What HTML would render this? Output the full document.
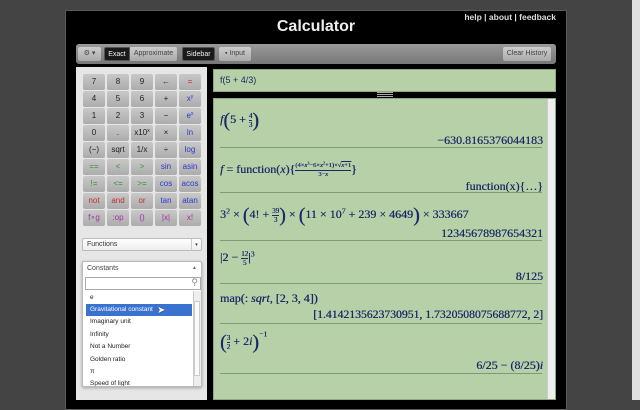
<!DOCTYPE html>
<html><head><meta charset="utf-8"><style>
*{box-sizing:border-box;margin:0;padding:0}
body{width:640px;height:400px;overflow:hidden;background:#444;font-family:"Liberation Sans",sans-serif;position:relative}
.a{position:absolute}
sup{font-size:65%;line-height:0;vertical-align:0.6em}
#panel{left:65px;top:10px;width:502px;height:400px;background:#000;border:1px solid #5a5a5a}
#title{left:65px;width:502px;top:18px;text-align:center;color:#eee;font-weight:bold;font-size:16px}
#links{right:84px;top:12px;color:#ddd;font-size:8.5px;font-weight:bold}
#bar{left:76px;top:44px;width:480px;height:20px;background:linear-gradient(#9a9a9a,#777);border-radius:3px}
.tb{position:absolute;top:47px;height:14px;font-size:7px;line-height:14px;text-align:center;border-radius:2px;background:linear-gradient(#ccc,#aaa);color:#444}
.dk{background:#1a1a1a;color:#eee;border:1px solid #555}
#side{left:76px;top:67px;width:131px;height:333px;background:#e6e6e6}
.b{position:absolute;width:22px;height:16px;background:linear-gradient(#c8c8c8,#acacac);border-radius:2px;font-size:8px;line-height:16px;text-align:center;color:#222;overflow:hidden}
.r{color:#c03030}.bl{color:#2a3acc}.g{color:#2a9a2a}.p{color:#a030a0}
#fn{left:82px;top:238px;width:120px;height:13px;background:linear-gradient(#fff,#eee);border:1px solid #bbb;border-radius:2px;font-size:7px;line-height:12px;padding-left:4px;color:#333}
#cons{left:82px;top:261px;width:120px;height:126px;background:#fff;border:1px solid #bbb;border-radius:2px;box-shadow:0 1px 3px rgba(0,0,0,.3)}
.li{position:absolute;left:2px;width:106px;height:12px;font-size:6.5px;line-height:12px;padding-left:4px;color:#222}
#inp{left:213px;top:69px;width:343px;height:23px;background:#b8d0a8;border:1px solid #8fa884;font-size:9px;line-height:21px;padding-left:6px;color:#1a2a60}
#hist{left:213px;top:98px;width:343px;height:302px;background:#b8d0a8;border:1px solid #8fa884;overflow:hidden}
.m{position:absolute;font-family:"Liberation Serif",serif;color:#1a2a66;font-size:12px;white-space:nowrap;line-height:16px;text-shadow:0.3px 0 0 #1a2a66}
.rt{right:12px}
.hr{position:absolute;left:6px;width:322px;height:1px;background:#7a9a7a}
.pa{font-size:20px;vertical-align:middle;font-weight:normal}
.fr{display:inline-block;vertical-align:middle;text-align:center;font-size:7px;line-height:8px}
.fr>span{display:block}
.fr>span:first-child{border-bottom:1px solid #1a2a66}
</style></head><body>
<div class="a" style="left:632px;top:0;width:8px;height:400px;background:#e0e0e0"></div>
<div class="a" id="panel"></div>
<div class="a" id="title">Calculator</div>
<div class="a" id="links">help | about | feedback</div>
<div class="a" id="bar"></div>
<div class="tb" style="left:78px;width:23px">⚙ ▾</div>
<div class="tb dk" style="left:104px;width:26px;border-radius:2px 0 0 2px">Exact</div>
<div class="tb" style="left:130px;width:47px;border-radius:0 2px 2px 0">Approximate</div>
<div class="tb dk" style="left:182px;width:33px">Sidebar</div>
<div class="tb" style="left:219px;width:32px">▪ Input</div>
<div class="tb" style="left:503px;width:48px">Clear History</div>
<div class="a" id="side"></div>
<div class="b" style="left:83px;top:74px">7</div><div class="b" style="left:107px;top:74px">8</div><div class="b" style="left:131px;top:74px">9</div><div class="b" style="left:155px;top:74px">←</div><div class="b r" style="left:179px;top:74px">=</div>
<div class="b" style="left:83px;top:91px">4</div><div class="b" style="left:107px;top:91px">5</div><div class="b" style="left:131px;top:91px">6</div><div class="b" style="left:155px;top:91px">+</div><div class="b bl" style="left:179px;top:91px">x<sup>y</sup></div>
<div class="b" style="left:83px;top:108px">1</div><div class="b" style="left:107px;top:108px">2</div><div class="b" style="left:131px;top:108px">3</div><div class="b" style="left:155px;top:108px">−</div><div class="b bl" style="left:179px;top:108px">e<sup>x</sup></div>
<div class="b" style="left:83px;top:125px">0</div><div class="b" style="left:107px;top:125px">.</div><div class="b" style="left:131px;top:125px">x10<sup>x</sup></div><div class="b" style="left:155px;top:125px">×</div><div class="b bl" style="left:179px;top:125px">ln</div>
<div class="b" style="left:83px;top:142px">(−)</div><div class="b" style="left:107px;top:142px">sqrt</div><div class="b" style="left:131px;top:142px">1/x</div><div class="b" style="left:155px;top:142px">÷</div><div class="b bl" style="left:179px;top:142px">log</div>
<div class="b g" style="left:83px;top:159px">==</div><div class="b g" style="left:107px;top:159px">&lt;</div><div class="b g" style="left:131px;top:159px">&gt;</div><div class="b bl" style="left:155px;top:159px">sin</div><div class="b bl" style="left:179px;top:159px">asin</div>
<div class="b g" style="left:83px;top:176px">!=</div><div class="b g" style="left:107px;top:176px">&lt;=</div><div class="b g" style="left:131px;top:176px">&gt;=</div><div class="b bl" style="left:155px;top:176px">cos</div><div class="b bl" style="left:179px;top:176px">acos</div>
<div class="b r" style="left:83px;top:193px">not</div><div class="b r" style="left:107px;top:193px">and</div><div class="b r" style="left:131px;top:193px">or</div><div class="b bl" style="left:155px;top:193px">tan</div><div class="b bl" style="left:179px;top:193px">atan</div>
<div class="b p" style="left:83px;top:210px">f∘g</div><div class="b p" style="left:107px;top:210px">:op</div><div class="b p" style="left:131px;top:210px">()</div><div class="b p" style="left:155px;top:210px">|x|</div><div class="b p" style="left:179px;top:210px">x!</div>
<div class="a" id="fn">Functions<span style="position:absolute;right:0;top:0;width:10px;height:11px;border-left:1px solid #ccc;text-align:center;font-size:5px">▾</span></div>
<div class="a" id="cons">
<div class="a" style="left:4px;top:3px;font-size:7px;color:#444">Constants</div>
<div class="a" style="right:4px;top:3px;font-size:5px;color:#666">▲</div>
<div class="a" style="left:2px;top:15px;width:116px;height:13px;border:1px solid #aaa;background:#fff"><span style="position:absolute;right:2px;top:-1px;font-size:9px;color:#888">⚲</span></div>
<div class="a" style="left:1px;top:29px;width:118px;height:95px;overflow:hidden">
<div class="li" style="top:1px">e</div>
<div class="li" style="top:13px;background:#3a72d0;color:#fff">Gravitational constant</div>
<div class="li" style="top:25px">Imaginary unit</div>
<div class="li" style="top:38px">Infinity</div>
<div class="li" style="top:50px">Not a Number</div>
<div class="li" style="top:63px">Golden ratio</div>
<div class="li" style="top:75px">π</div>
<div class="li" style="top:87px">Speed of light</div>
<div class="a" style="right:1px;top:0;width:8px;height:95px;background:#eee;border-left:1px solid #ccc"></div>
<div class="a" style="right:2px;top:10px;width:6px;height:75px;background:#fafafa;border:1px solid #ccc"></div>
</div>
</div>
<div class="a" style="left:157px;top:305px;font-size:10px;color:#fff;text-shadow:0 0 1px #000">➤</div>
<div class="a" id="inp">f(5 + 4/3)</div>
<div class="a" style="left:377px;top:92px;width:16px;height:5px;border-top:1px solid #aaa;border-bottom:1px solid #aaa"><div style="margin-top:1px;height:1px;background:#aaa"></div></div>
<div class="a" id="hist">
<div class="a" style="right:0;top:0;width:8px;height:302px;background:#eee;border-left:1px solid #ccc"></div>
<div class="m" style="left:6px;top:12px"><i>f</i><span class="pa">(</span>5 + <span class="fr"><span>4</span><span>3</span></span><span class="pa">)</span></div>
<div class="m rt" style="top:33px">−630.8165376044183</div>
<div class="hr" style="top:48px"></div>
<div class="m" style="left:6px;top:62px"><i>f</i> = function(<i>x</i>){<span class="fr" style="font-size:6.5px"><span>(4×<i>x</i><sup>3</sup>−6×<i>x</i><sup>2</sup>+1)×√<span style="text-decoration:overline"><i>x</i>+1</span></span><span>3−<i>x</i></span></span>}</div>
<div class="m rt" style="top:79px">function(x){…}</div>
<div class="hr" style="top:93px"></div>
<div class="m" style="left:6px;top:107px">3<sup>2</sup> × <span class="pa">(</span>4! + <span class="fr"><span>39</span><span>3</span></span><span class="pa">)</span> × <span class="pa">(</span>11 × 10<sup>7</sup> + 239 × 4649<span class="pa">)</span> × 333667</div>
<div class="m rt" style="top:126px">12345678987654321</div>
<div class="hr" style="top:141px"></div>
<div class="m" style="left:6px;top:150px">|2 − <span class="fr"><span>12</span><span>5</span></span>|<sup>3</sup></div>
<div class="m rt" style="top:169px">8/125</div>
<div class="hr" style="top:184px"></div>
<div class="m" style="left:6px;top:191px">map(: <i>sqrt</i>, [2, 3, 4])</div>
<div class="m rt" style="top:208px;font-size:11.7px">[1.4142135623730951, 1.7320508075688772, 2]</div>
<div class="hr" style="top:224px"></div>
<div class="m" style="left:6px;top:234px"><span class="pa">(</span><span class="fr"><span>3</span><span>2</span></span> + 2<i>i</i><span class="pa">)</span><sup style="vertical-align:1.1em">−1</sup></div>
<div class="m rt" style="top:258px">6/25 − (8/25)<i>i</i></div>
<div class="hr" style="top:274px"></div>
</div>
</body></html>
